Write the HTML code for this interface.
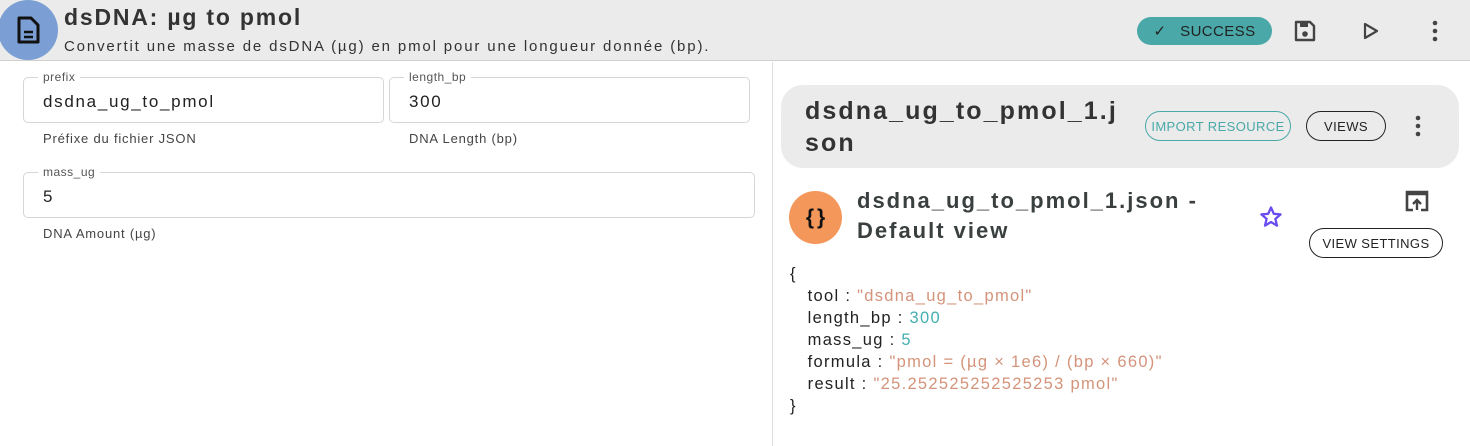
<!DOCTYPE html>
<html><head><style>
*{box-sizing:border-box;margin:0;padding:0}
body{width:1470px;height:446px;overflow:hidden;background:#fff;font-family:"Liberation Sans",sans-serif;color:#333;position:relative}
.a{position:absolute;white-space:nowrap}
.hdr{left:0;top:0;width:1470px;height:61px;background:#ebebeb;border-bottom:1px solid #d0d0d0}
.box{border:1px solid #d6d6d6;border-radius:5px}
.lbl{font-size:12px;color:#555;background:#fff;padding:0 5px;letter-spacing:.5px}
.val{font-size:17px;color:#222;letter-spacing:1.7px}
.help{font-size:13px;color:#444;letter-spacing:.8px}
.btn{border-radius:16px;font-size:13px;display:flex;align-items:center;justify-content:center;letter-spacing:.4px}
.js{font-size:16.5px;color:#222;line-height:22px;letter-spacing:1.3px}
.s{color:#d4937a}.n{color:#45aeb0}
</style></head><body>
<div class="a hdr"></div>
<div class="a" style="left:-2px;top:0;width:60px;height:60px;border-radius:50%;background:#7b9fd4"></div>
<svg class="a" style="left:14px;top:15px" width="28" height="30" viewBox="0 0 28 30"><path d="M5 3h12l7 7v17H5z" fill="none" stroke="#111" stroke-width="3" stroke-linejoin="round"/><path d="M10 17h9M10 22h9" stroke="#111" stroke-width="2.6"/></svg>
<div class="a" style="left:64px;top:4px;font-size:23px;font-weight:bold;color:#333;letter-spacing:1.8px">dsDNA: µg to pmol</div>
<div class="a" style="left:64px;top:38px;font-size:15px;color:#333;letter-spacing:1.85px">Convertit une masse de dsDNA (µg) en pmol pour une longueur donnée (bp).</div>
<div class="a btn" style="left:1137px;top:17px;width:135px;height:28px;background:#4aa8a8;color:#222;font-size:15px">✓&nbsp;&nbsp; SUCCESS</div>
<svg class="a" style="left:1293px;top:19px" width="24" height="24" viewBox="0 0 24 24"><path d="M3 3h14l4 4v14H3z" fill="none" stroke="#444" stroke-width="2.4" stroke-linejoin="round"/><rect x="7" y="4" width="8" height="4" fill="#444"/><circle cx="12" cy="15" r="2.8" fill="#444"/></svg>
<svg class="a" style="left:1362px;top:22px" width="18" height="18" viewBox="0 0 18 18"><path d="M3 2l12 7-12 7z" fill="none" stroke="#444" stroke-width="2.2" stroke-linejoin="round"/></svg>
<svg class="a" style="left:1431px;top:20px" width="8" height="22"><circle cx="4" cy="3" r="2.3" fill="#444"/><circle cx="4" cy="11" r="2.3" fill="#444"/><circle cx="4" cy="19" r="2.3" fill="#444"/></svg>

<div class="a box" style="left:23px;top:77px;width:361px;height:46px"></div>
<div class="a lbl" style="left:38px;top:70px">prefix</div>
<div class="a val" style="left:43px;top:92px">dsdna_ug_to_pmol</div>
<div class="a box" style="left:389px;top:77px;width:361px;height:46px"></div>
<div class="a lbl" style="left:404px;top:70px">length_bp</div>
<div class="a val" style="left:409px;top:92px">300</div>
<div class="a help" style="left:43px;top:131px">Préfixe du fichier JSON</div>
<div class="a help" style="left:409px;top:131px">DNA Length (bp)</div>
<div class="a box" style="left:23px;top:172px;width:732px;height:46px"></div>
<div class="a lbl" style="left:38px;top:165px">mass_ug</div>
<div class="a val" style="left:43px;top:187px">5</div>
<div class="a help" style="left:43px;top:226px">DNA Amount (µg)</div>

<div class="a" style="left:772px;top:62px;width:1px;height:384px;background:#ddd"></div>
<div class="a" style="left:781px;top:85px;width:678px;height:83px;background:#ebebeb;border-radius:22px"></div>
<div class="a" style="left:805px;top:95px;font-size:25px;font-weight:bold;color:#333;line-height:32px;letter-spacing:2.1px">dsdna_ug_to_pmol_1.j<br>son</div>
<div class="a btn" style="left:1145px;top:111px;width:146px;height:30px;border:1.5px solid #4aa8a8;color:#4aa8a8">IMPORT RESOURCE</div>
<div class="a btn" style="left:1306px;top:111px;width:80px;height:30px;border:1.5px solid #222;color:#222">VIEWS</div>
<svg class="a" style="left:1414px;top:115px" width="8" height="22"><circle cx="4" cy="3" r="2.3" fill="#444"/><circle cx="4" cy="11" r="2.3" fill="#444"/><circle cx="4" cy="19" r="2.3" fill="#444"/></svg>

<div class="a" style="left:789px;top:191px;width:53px;height:53px;border-radius:50%;background:#f4975a;color:#111;font-size:21px;font-weight:bold;display:flex;align-items:center;justify-content:center;letter-spacing:3px;padding-left:3px">{}</div>
<div class="a" style="left:857px;top:186px;font-size:22px;font-weight:bold;color:#3a3f3f;line-height:30px;letter-spacing:2px">dsdna_ug_to_pmol_1.json -<br>Default view</div>
<svg class="a" style="left:1259px;top:205px" width="24" height="24" viewBox="0 0 24 24"><path d="M12 2.5l2.8 6.3 6.8.6-5.2 4.5 1.6 6.7L12 17l-6 3.6 1.6-6.7-5.2-4.5 6.8-.6z" fill="none" stroke="#6a4cf0" stroke-width="2.3" stroke-linejoin="round"/></svg>
<svg class="a" style="left:1405px;top:190px" width="24" height="22" viewBox="0 0 24 22"><path d="M2 4V2h20v18h-6M8 20H2V4h20" fill="none" stroke="#444" stroke-width="2.6"/><path d="M12 20v-9M8 14l4-4 4 4" fill="none" stroke="#444" stroke-width="2.4"/></svg>
<div class="a btn" style="left:1309px;top:228px;width:134px;height:30px;border:1.5px solid #222;color:#222">VIEW SETTINGS</div>

<div class="a js" style="left:790px;top:263px">{<br>
&nbsp;&nbsp;&nbsp;tool : <span class="s">"dsdna_ug_to_pmol"</span><br>
&nbsp;&nbsp;&nbsp;length_bp : <span class="n">300</span><br>
&nbsp;&nbsp;&nbsp;mass_ug : <span class="n">5</span><br>
&nbsp;&nbsp;&nbsp;formula : <span class="s">"pmol = (µg × 1e6) / (bp × 660)"</span><br>
&nbsp;&nbsp;&nbsp;result : <span class="s">"25.252525252525253 pmol"</span><br>}</div>
</body></html>
